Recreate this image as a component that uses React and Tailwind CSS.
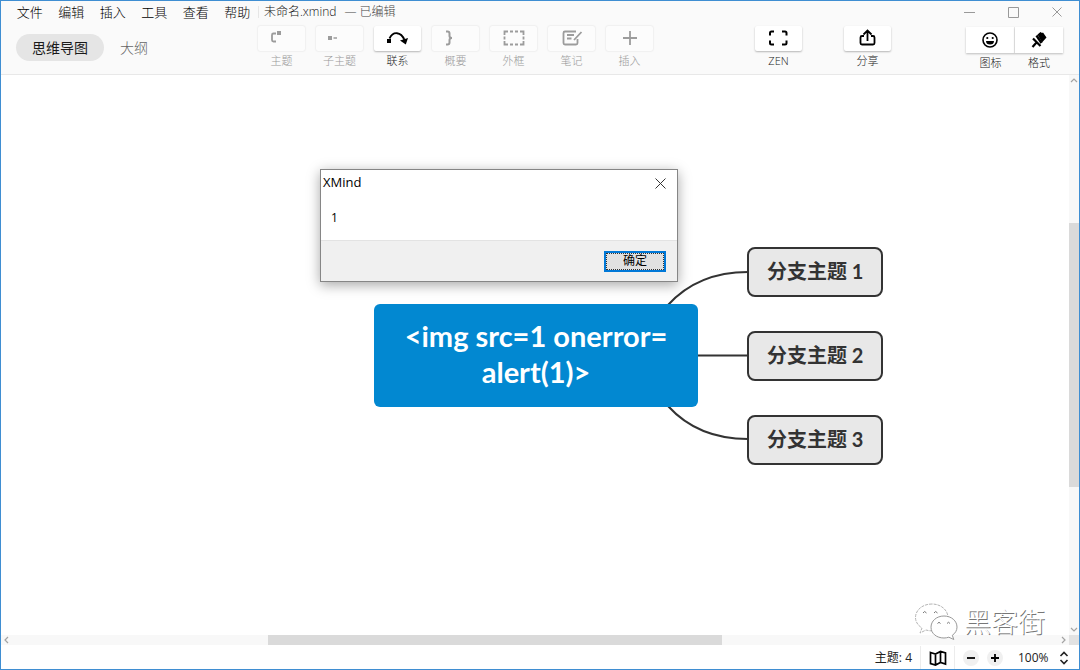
import React from "react";

const tools = [
  {
    label: "主题",
    icon: (
      <>
        <path d="M18 7.5h-2.5q-1.5 0-1.5 1.5v5q0 1.5 1.5 1.5H18" fill="none" stroke="currentColor" strokeWidth="1.8" />
        <rect x="19" y="5" width="4" height="4" fill="currentColor" />
      </>
    ),
  },
  {
    label: "子主题",
    icon: (
      <>
        <rect x="12" y="10" width="4" height="4" fill="currentColor" />
        <path d="M17.5 12H21" stroke="currentColor" strokeWidth="1.5" />
      </>
    ),
  },
  {
    label: "联系",
    active: true,
    icon: (
      <>
        <rect x="13" y="13" width="4" height="4" fill="currentColor" />
        <path d="M15.5 12.5C19 5 27 5.500 30.5 14" fill="none" stroke="currentColor" strokeWidth="1.8" />
        <path d="M26 14.5l8-2.5-2.2 6.500z" fill="currentColor" />
      </>
    ),
  },
  {
    label: "概要",
    icon: (
      <path
        d="M14 5.5h1.5q2 0 2 2V10q0 2 2.5 2q-2.5 0-2.5 2v2.5q0 2-2 2H14"
        fill="none"
        stroke="currentColor"
        strokeWidth="2"
      />
    ),
  },
  {
    label: "外框",
    icon: (
      <path
        d="M14.5 9V5.5H18M20 5.5h3M25 5.5h3M30 5.5h3.5V9M33.5 10.5v3M33.5 15v3.5H30M28 18.5h-3M23 18.5h-3M18 18.5h-3.5V15M14.5 13.5v-3"
        fill="none"
        stroke="currentColor"
        strokeWidth="1.8"
      />
    ),
  },
  {
    label: "笔记",
    icon: (
      <path
        d="M28 5.5H17q-1.5 0-1.5 1.5v10q0 1.5 1.5 1.5h11q1.5 0 1.5-1.5v-4M19 9h7M19 12.5h4.5M33.5 6l-7.5 8"
        fill="none"
        stroke="currentColor"
        strokeWidth="1.8"
      />
    ),
  },
  {
    label: "插入",
    icon: <path d="M17 12h14M24 5v14" stroke="currentColor" strokeWidth="1.8" />,
  },
];

const zenIcon = (
  <path
    d="M15 9.5V7q0-1.5 1.5-1.5H19M27 5.5h3q1.5 0 1.5 1.5v2.5M31.5 14.5V17q0 1.5-1.5 1.5h-3M19 18.5h-2.5q-1.5 0-1.5-1.5v-2.5"
    fill="none"
    stroke="currentColor"
    strokeWidth="2"
  />
);

const shareIcon = (
  <path
    d="M20 10h-2q-1.5 0-1.5 1.5V17q0 1.5 1.5 1.5h11q1.5 0 1.5-1.5v-5.5Q30.5 10 29 10h-2M23.5 15V4.5M19.5 8.5l4-4 4 4"
    fill="none"
    stroke="currentColor"
    strokeWidth="1.8"
  />
);

function ToolButton({ label, icon, enabled }) {
  return (
    <button
      className={
        enabled
          ? "flex w-[47px] flex-col items-center text-[#222]"
          : "flex w-[47px] flex-col items-center text-[#999]"
      }
    >
      <span
        className={
          enabled
            ? "block h-[25px] w-full rounded-xs bg-white text-black shadow-[0_1px_2px_rgba(0,0,0,0.28)]"
            : "block h-[25px] w-full rounded-xs bg-[#fcfcfc] text-[#9c9c9c] shadow-[0_0_2px_rgba(0,0,0,0.14)]"
        }
      >
        <svg width="47" height="25" viewBox="0 0 47 25" aria-hidden="true">
          {icon}
        </svg>
      </span>
      <span className="mt-0.5 whitespace-nowrap text-[11px] leading-4 font-light">{label}</span>
    </button>
  );
}

function Header() {
  return (
    <header className="shrink-0 border-b border-[#e8e8e8] bg-[#fafafa]">
      <div className="flex h-[22px] items-center">
        <nav className="ml-2 flex w-[249px] text-[13px] leading-5 font-light text-black">
          {["文件", "编辑", "插入", "工具", "查看", "帮助"].map((m) => (
            <button key={m} className="flex-1">
              {m}
            </button>
          ))}
        </nav>
        <div className="flex items-center gap-2 border-l border-[#e6e6e6] pl-[5px] text-xs leading-3 font-light">
          <span className="text-[#111]">未命名.xmind</span>
          <span className="text-[#444]">— 已编辑</span>
        </div>
        <div className="mr-4 ml-auto flex items-center gap-8 text-[#999]">
          {[
            ["最小化", "M1 6.5h11"],
            ["最大化", "M1.5 1.5h10v10h-10z"],
            ["关闭", "M1.5 1.5l9 9M10.5 1.5l-9 9"],
          ].map(([label, d]) => (
            <button key={label} aria-label={label}>
              <svg width="12" height="12" viewBox="0 0 12 12" fill="none" stroke="currentColor">
                <path d={d} />
              </svg>
            </button>
          ))}
        </div>
      </div>
      <div className="flex h-[51px] items-start pt-0.5">
        <div className="flex w-[257px] items-center gap-4 pt-[9px] pl-[15px] text-sm">
          <button className="h-[27px] rounded-full bg-[#e5e5e5] px-4 text-[#1a1a1a]">思维导图</button>
          <button className="font-light text-[#666]">大纲</button>
        </div>
        <div className="flex gap-[11px] pt-px">
          {tools.map((t) => (
            <ToolButton key={t.label} label={t.label} icon={t.icon} enabled={t.active} />
          ))}
        </div>
        <div className="ml-auto flex gap-[42px] pt-px">
          <ToolButton label="ZEN" icon={zenIcon} enabled />
          <ToolButton label="分享" icon={shareIcon} enabled />
        </div>
        <div className="mr-4 ml-[75px] flex pt-0.5 text-[11px] leading-4 font-light text-[#222]">
          <button className="w-[49px]">
            <span className="block h-[26px] border-r border-[#ececec] bg-white text-black shadow-[0_1px_2px_rgba(0,0,0,0.25)]">
              <svg width="48" height="26" viewBox="0 0 48 26" aria-hidden="true">
                <circle cx="24" cy="13" r="7" fill="none" stroke="currentColor" strokeWidth="1.6" />
                <circle cx="21.3" cy="11" r="1.1" fill="currentColor" />
                <circle cx="26.7" cy="11" r="1.1" fill="currentColor" />
                <path d="M20 14h8a4 3.6 0 0 1-8 0z" fill="currentColor" />
              </svg>
            </span>
            <span className="mt-0.5 block">图标</span>
          </button>
          <button className="w-12">
            <span className="block h-[26px] bg-white text-black shadow-[0_1px_2px_rgba(0,0,0,0.25)]">
              <svg width="48" height="26" viewBox="0 0 48 26" aria-hidden="true">
                <path d="M22.500 7.500L25.500 5l1.500 1 1-.5 3.500 5-4.500 5z" fill="currentColor" />
                <path d="M21.500 8.500l5 7.500" stroke="currentColor" strokeWidth="2.4" />
                <path d="M18 11.500l7.500 7.500M21.500 15.500L17.500 20" fill="none" stroke="currentColor" strokeWidth="2.2" />
              </svg>
            </span>
            <span className="mt-0.5 block">格式</span>
          </button>
        </div>
      </div>
    </header>
  );
}

function Chevron({ d, label }) {
  return (
    <button aria-label={label} className="flex h-2.5 w-2.5 shrink-0 items-center justify-center text-[#a3a3a3]">
      <svg width="8" height="8" viewBox="0 0 8 8" fill="none" stroke="currentColor" strokeWidth="1.2">
        <path d={d} />
      </svg>
    </button>
  );
}

function Branch({ children, className }) {
  return (
    <div
      className={
        "absolute left-[746px] flex h-[50px] items-center rounded-lg border-2 border-[#333] bg-[#e8e8e8] px-[18px] pb-0.5 font-['Lato','Noto_Sans_CJK_SC',sans-serif] text-xl font-bold whitespace-nowrap text-[#333] " +
        className
      }
    >
      {children}
    </div>
  );
}

function Dialog() {
  return (
    <section
      role="dialog"
      aria-label="XMind"
      className="absolute top-[94px] left-[319px] w-[358px] border border-[#868686] bg-white text-[13px] text-black shadow-[0_3px_12px_rgba(0,0,0,0.35)]"
    >
      <div className="flex h-[26px] items-center justify-between pr-[11px] pl-0.5">
        <h1>XMind</h1>
        <button aria-label="关闭">
          <svg width="11" height="11" viewBox="0 0 11 11" fill="none" stroke="#333">
            <path d="M.5.5l10 10M10.5.5l-10 10" />
          </svg>
        </button>
      </div>
      <p className="flex h-11 items-center px-2.5 text-xs">1</p>
      <div className="flex h-[41px] items-center justify-end border-t border-[#e3e3e3] bg-[#f0f0f0] px-[11px]">
        <button className="h-[21px] w-[62px] border-2 border-[#0078d7] bg-[#e1e1e1] text-xs leading-4 outline-1 -outline-offset-3 outline-[#333] outline-dotted">
          确定
        </button>
      </div>
    </section>
  );
}

function Watermark() {
  return (
    <div className="absolute right-[34px] bottom-1 flex items-center gap-1.5">
      <svg width="44" height="38" viewBox="0 0 44 38" fill="#fff" stroke="#999" strokeWidth="1">
        <path
          d="M18 1C8.500 1 1.500 7 1.500 14.500c0 4.500 2.500 8 6.500 10.500l-2 5 6-3c2 .6 4 .9 6 .8 9 0 16-6 16-13.300S27 1 18 1z"
          stroke="#b4b4b4"
          strokeDasharray="3 1"
        />
        <path d="M30 13c-7.500 0-13 5-13 11.200S22.500 35 30 35c1.600 0 3.300-.3 4.800-.8l5 2.300-1.500-4.200c3-2 4.700-5 4.700-8.200C43 18 37.500 13 30 13z" />
        <path d="M9 10q1.500-3 3.500 0M20 10q1.500-3 3.500 0M23.500 20.500q1.500-2.500 3 0M33 20.500q1.500-2.500 3 0" fill="none" stroke="#777" />
      </svg>
      <span className="text-[27px] leading-9 font-light text-white [text-shadow:1px_1px_0_#777]">黑客街</span>
    </div>
  );
}

function Canvas() {
  return (
    <main className="relative min-w-0 flex-1 overflow-hidden bg-white">
      <svg className="absolute top-0 left-0" width="900" height="420" fill="none" stroke="#333" strokeWidth="2" aria-hidden="true">
        <path d="M667 230Q697 197 747 197M697 280.500H747M667 331Q697 364 747 364" />
      </svg>
      <div className="absolute top-[229px] left-[373px] flex h-[103px] w-[324px] items-center justify-center rounded-md bg-[#0288d1] pb-1 text-center font-['Lato',sans-serif] text-[29px] leading-9 font-bold text-white">
        <p>
          &lt;img src=1 onerror=
          <br />
          alert(1)&gt;
        </p>
      </div>
      <Branch className="top-[172px]">分支主题 1</Branch>
      <Branch className="top-[256px]">分支主题 2</Branch>
      <Branch className="top-[340px]">分支主题 3</Branch>
      <Dialog />
    </main>
  );
}

function StatusBar() {
  return (
    <footer className="flex h-6 shrink-0 items-center justify-end bg-white pt-px text-xs text-[#222]">
      <span className="pr-2">主题: 4</span>
      <button aria-label="导航" className="flex h-6 w-[35px] items-center justify-center border-x border-[#ececec] text-black">
        <svg width="18" height="16" viewBox="0 0 18 16" fill="none" stroke="currentColor" strokeWidth="1.7">
          <path d="M1.500 2.500l5 1.500 5-2.500 5 1.500v11l-5-1.500-5 2.500-5-1.500zM6.500 3.500V15M11.500 1.500v11.500" />
        </svg>
      </button>
      <div className="ml-2 flex gap-2 text-black">
        {[
          ["缩小", "M4 8h8"],
          ["放大", "M4 8h8M8 4v8"],
        ].map(([label, d]) => (
          <button key={label} aria-label={label} className="rounded-full bg-[#f0f0f0]">
            <svg width="16" height="16" viewBox="0 0 16 16" fill="none" stroke="currentColor" strokeWidth="1.8">
              <path d={d} />
            </svg>
          </button>
        ))}
      </div>
      <label className="mr-2.5 ml-[15px] flex items-center gap-2.5">
        <select aria-label="缩放比例" defaultValue="100%" className="appearance-none bg-transparent">
          <option>100%</option>
        </select>
        <svg width="10" height="14" viewBox="0 0 10 14" fill="none" stroke="currentColor" strokeWidth="1.6" aria-hidden="true">
          <path d="M1.500 5L5 1.500 8.500 5M1.500 9L5 12.500 8.500 9" />
        </svg>
      </label>
    </footer>
  );
}

export default function App() {
  return (
    <div className="flex h-screen flex-col overflow-hidden border border-[#3f8ed2] bg-white font-['Open_Sans','Noto_Sans_CJK_SC',sans-serif]">
      <Header />
      <div className="relative flex min-h-0 flex-1 flex-col">
        <div className="flex min-h-0 flex-1">
          <Canvas />
          <div className="flex w-2.5 shrink-0 flex-col bg-[#f8f8f8]">
            <Chevron label="向上滚动" d="M1 6l3-3 3 3" />
            <div className="flex flex-1 flex-col">
              <div className="flex-[138]" />
              <div className="flex-[264] bg-[#dadada]" />
              <div className="flex-[138]" />
            </div>
            <Chevron label="向下滚动" d="M1 2l3 3 3-3" />
          </div>
        </div>
        <div className="flex h-2.5 shrink-0 bg-[#f8f8f8]">
          <Chevron label="向左滚动" d="M6 1L3 4l3 3" />
          <div className="flex flex-1">
            <div className="flex-[257]" />
            <div className="flex-[454] bg-[#dadada]" />
            <div className="flex-[337]" />
          </div>
          <Chevron label="向右滚动" d="M2 1l3 3-3 3" />
          <div className="w-2.5 shrink-0 bg-[#e2e2e2]" />
        </div>
        <Watermark />
      </div>
      <StatusBar />
    </div>
  );
}
